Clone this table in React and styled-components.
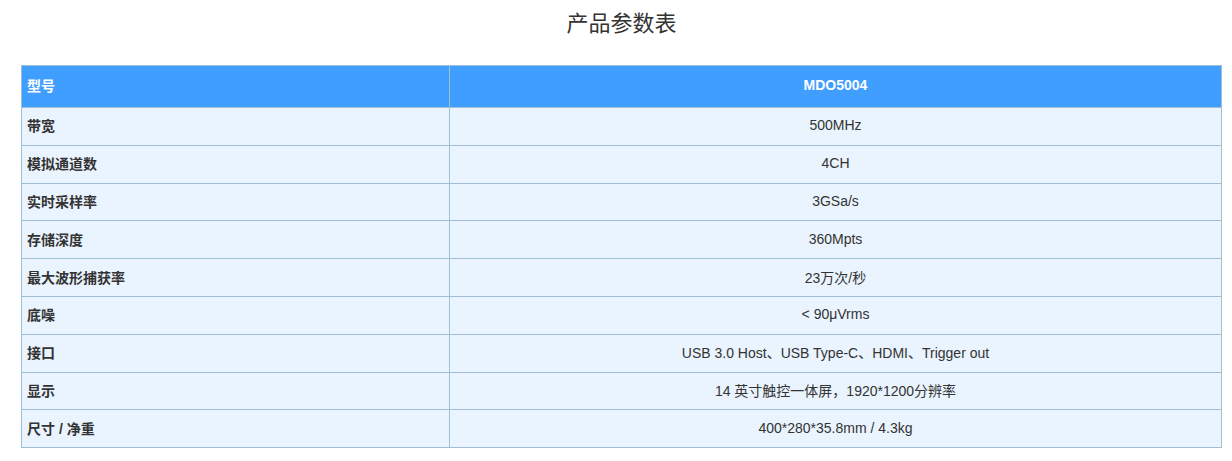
import React from 'react'
import styled, { createGlobalStyle } from 'styled-components'

const GlobalStyle = createGlobalStyle`
  body {
    margin: 0;
    background: #ffffff;
    font-family: "Liberation Sans", Arial, "Noto Sans CJK SC", sans-serif;
  }
`

const Page = styled.div`
  width: 1201px;
  margin-left: 21px;
  padding-top: 9px;
`

const Title = styled.h2`
  margin: 0;
  height: 30px;
  line-height: 30px;
  text-align: center;
  font-size: 22px;
  font-weight: normal;
  color: #333333;
  font-family: "Liberation Sans", "Noto Sans CJK SC", sans-serif;
`

const Table = styled.table`
  margin-top: 26px;
  width: 1201px;
  border-collapse: collapse;
  table-layout: fixed;
  font-size: 14px;
  font-family: "Liberation Sans", Arial, "Noto Sans CJK SC", sans-serif;
`

const Row = styled.tr`
  background: ${p => (p.$head ? '#409eff' : '#eaf4fe')};
  height: ${p => (p.$head ? '42px' : '37.8px')};
`

const Label = styled.td`
  width: 417px;
  padding: 0 5px ${p => (p.$head ? '3px' : '2px')};
  border: 1px solid #9fbfd6;
  font-weight: bold;
  color: ${p => (p.$head ? '#ffffff' : '#333333')};
  text-align: left;
`

const Value = styled.td`
  padding: 0 0 ${p => (p.$head ? '3px' : '2px')};
  border: 1px solid #9fbfd6;
  text-align: center;
  color: ${p => (p.$head ? '#ffffff' : '#333333')};
  font-weight: ${p => (p.$head ? 'bold' : 'normal')};
`

const specs = [
  ['带宽', '500MHz'],
  ['模拟通道数', '4CH'],
  ['实时采样率', '3GSa/s'],
  ['存储深度', '360Mpts'],
  ['最大波形捕获率', '23万次/秒'],
  ['底噪', '< 90μVrms'],
  ['接口', 'USB 3.0 Host、USB Type-C、HDMI、Trigger out'],
  ['显示', '14 英寸触控一体屏，1920*1200分辨率'],
  ['尺寸 / 净重', '400*280*35.8mm / 4.3kg'],
]

export default function App() {
  return (
    <Page>
      <GlobalStyle />
      <Title>产品参数表</Title>
      <Table>
        <tbody>
          <Row $head>
            <Label $head>型号</Label>
            <Value $head>MDO5004</Value>
          </Row>
          {specs.map(([k, v]) => (
            <Row key={k}>
              <Label>{k}</Label>
              <Value>{v}</Value>
            </Row>
          ))}
        </tbody>
      </Table>
    </Page>
  )
}
